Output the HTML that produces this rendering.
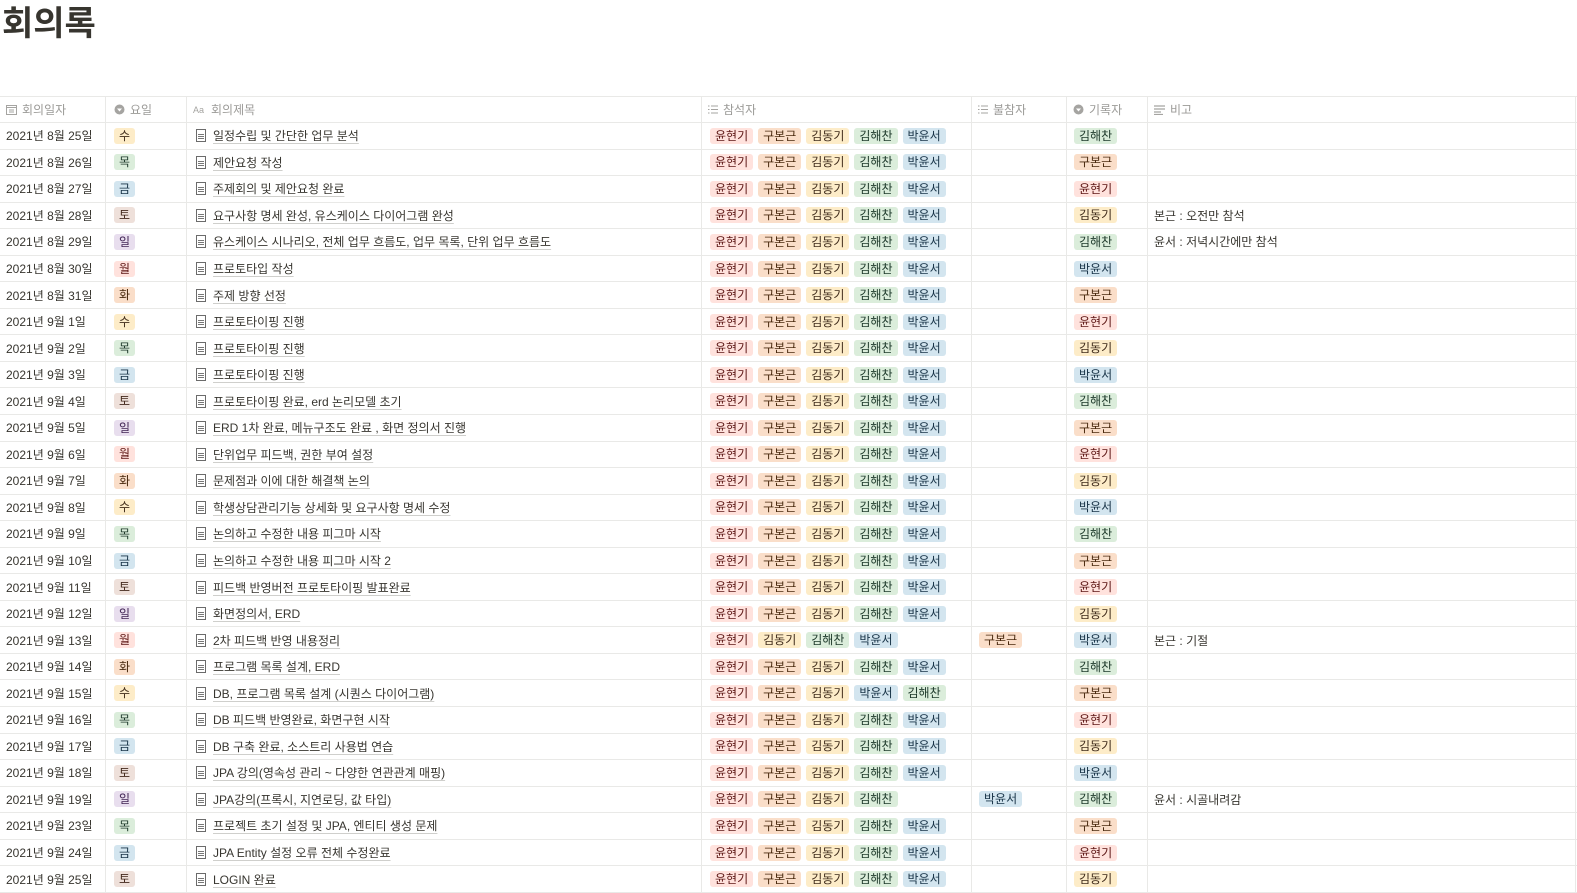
<!DOCTYPE html>
<html><head><meta charset="utf-8"><style>
html,body{margin:0;padding:0}
body{background:#fff;font-family:"Liberation Sans","Noto Sans CJK KR",sans-serif;color:#37352f;overflow:hidden;width:1577px;height:885px;position:relative}
h1{position:absolute;left:2px;top:-4px;margin:0;font-size:34px;font-weight:700;color:#37352f;font-family:"Liberation Sans","Noto Sans CJK KR",sans-serif}
.t{position:absolute;left:0;top:96px;width:1577px;border-top:1px solid #e9e9e7;overflow:hidden}
.r{display:grid;grid-template-columns:106px 81px 515px 270px 95px 81px 428px 1px;width:1577px;height:26.55px;box-sizing:border-box;border-bottom:1px solid #e9e9e7}
.r>div{border-right:1px solid #e9e9e7;box-sizing:border-box;padding-left:6px;display:flex;align-items:center;white-space:nowrap;overflow:hidden;font-size:12px}
.r>div:last-child{border-right:none}
.h{height:26px}
.h>div{color:#9b9a97;font-size:12px}
.h>div svg{margin-right:5px}
.g{display:inline-block;height:16px;line-height:16px;padding:0 5px;border-radius:3px;font-size:12px;margin-right:5px;font-weight:400}
.c2{padding-left:8px!important}
.c4{padding-left:8px!important}
.c5{padding-left:7px!important}
.c6{padding-left:7px!important}
.R{background:#ffe2dd;color:#5d1715}.O{background:#fadec9;color:#49290e}.Y{background:#fdecc8;color:#402c1b}.G{background:#dbeddb;color:#1c3829}.B{background:#d3e5ef;color:#183347}.P{background:#e8deee;color:#412454}.N{background:#eee0da;color:#442a1e}
.ti{padding-left:9px!important}
.ti span{text-decoration:underline;text-decoration-color:#cfcfcc;text-underline-offset:3px}
.ti i{display:inline-block;width:10px;height:13px;border:1px solid #6b6b6b;margin-right:7px;box-sizing:border-box;position:relative;background:linear-gradient(#777,#777) 1px 4px/6px 1px no-repeat,linear-gradient(#777,#777) 1px 6px/6px 1px no-repeat,linear-gradient(#777,#777) 1px 8px/6px 1px no-repeat}
</style></head><body>
<h1>회의록</h1>
<div class="t">
<div class="r h">
<div><svg width="11" height="11" viewBox="0 0 11 11"><rect x="0.5" y="1.5" width="10" height="9" fill="none" stroke="#a5a4a1"/><path d="M0.5 3.5h10M3 6h5M3 8h5" stroke="#a5a4a1"/></svg>회의일자</div>
<div class="c2"><svg width="11" height="11" viewBox="0 0 11 11"><circle cx="5.5" cy="5.5" r="5" fill="#a5a4a1"/><path d="M3 4.5h5l-2.5 3z" fill="#fff"/></svg>요일</div>
<div><svg width="13" height="9" viewBox="0 0 13 9"><text x="0" y="8" font-size="9" fill="#a5a4a1" font-family="Liberation Sans">Aa</text></svg>회의제목</div>
<div><svg width="10" height="9" viewBox="0 0 10 9"><path d="M0 1h1.5M3 1h7M0 4.5h1.5M3 4.5h7M0 8h1.5M3 8h7" stroke="#a5a4a1"/></svg>참석자</div>
<div><svg width="10" height="9" viewBox="0 0 10 9"><path d="M0 1h1.5M3 1h7M0 4.5h1.5M3 4.5h7M0 8h1.5M3 8h7" stroke="#a5a4a1"/></svg>불참자</div>
<div><svg width="11" height="11" viewBox="0 0 11 11"><circle cx="5.5" cy="5.5" r="5" fill="#a5a4a1"/><path d="M3 4.5h5l-2.5 3z" fill="#fff"/></svg>기록자</div>
<div><svg width="11" height="10" viewBox="0 0 11 10"><path d="M0 1h11M0 4h11M0 7h7M0 9.5h9" stroke="#a5a4a1" stroke-width="1.3"/></svg>비고</div>
<div></div>
</div>

<div class="r"><div>2021년 8월 25일</div><div class="c2"><b class="g Y">수</b></div><div class="ti"><i></i><span>일정수립 및 간단한 업무 분석</span></div><div class="c4"><b class="g R">윤현기</b><b class="g O">구본근</b><b class="g Y">김동기</b><b class="g G">김해찬</b><b class="g B">박윤서</b></div><div class="c5"></div><div class="c6"><b class="g G">김해찬</b></div><div></div><div></div></div>
<div class="r"><div>2021년 8월 26일</div><div class="c2"><b class="g G">목</b></div><div class="ti"><i></i><span>제안요청 작성</span></div><div class="c4"><b class="g R">윤현기</b><b class="g O">구본근</b><b class="g Y">김동기</b><b class="g G">김해찬</b><b class="g B">박윤서</b></div><div class="c5"></div><div class="c6"><b class="g O">구본근</b></div><div></div><div></div></div>
<div class="r"><div>2021년 8월 27일</div><div class="c2"><b class="g B">금</b></div><div class="ti"><i></i><span>주제회의 및 제안요청 완료</span></div><div class="c4"><b class="g R">윤현기</b><b class="g O">구본근</b><b class="g Y">김동기</b><b class="g G">김해찬</b><b class="g B">박윤서</b></div><div class="c5"></div><div class="c6"><b class="g R">윤현기</b></div><div></div><div></div></div>
<div class="r"><div>2021년 8월 28일</div><div class="c2"><b class="g N">토</b></div><div class="ti"><i></i><span>요구사항 명세 완성, 유스케이스 다이어그램 완성</span></div><div class="c4"><b class="g R">윤현기</b><b class="g O">구본근</b><b class="g Y">김동기</b><b class="g G">김해찬</b><b class="g B">박윤서</b></div><div class="c5"></div><div class="c6"><b class="g Y">김동기</b></div><div>본근 : 오전만 참석</div><div></div></div>
<div class="r"><div>2021년 8월 29일</div><div class="c2"><b class="g P">일</b></div><div class="ti"><i></i><span>유스케이스 시나리오, 전체 업무 흐름도, 업무 목록, 단위 업무 흐름도</span></div><div class="c4"><b class="g R">윤현기</b><b class="g O">구본근</b><b class="g Y">김동기</b><b class="g G">김해찬</b><b class="g B">박윤서</b></div><div class="c5"></div><div class="c6"><b class="g G">김해찬</b></div><div>윤서 : 저녁시간에만 참석</div><div></div></div>
<div class="r"><div>2021년 8월 30일</div><div class="c2"><b class="g R">월</b></div><div class="ti"><i></i><span>프로토타입 작성</span></div><div class="c4"><b class="g R">윤현기</b><b class="g O">구본근</b><b class="g Y">김동기</b><b class="g G">김해찬</b><b class="g B">박윤서</b></div><div class="c5"></div><div class="c6"><b class="g B">박윤서</b></div><div></div><div></div></div>
<div class="r"><div>2021년 8월 31일</div><div class="c2"><b class="g O">화</b></div><div class="ti"><i></i><span>주제 방향 선정</span></div><div class="c4"><b class="g R">윤현기</b><b class="g O">구본근</b><b class="g Y">김동기</b><b class="g G">김해찬</b><b class="g B">박윤서</b></div><div class="c5"></div><div class="c6"><b class="g O">구본근</b></div><div></div><div></div></div>
<div class="r"><div>2021년 9월 1일</div><div class="c2"><b class="g Y">수</b></div><div class="ti"><i></i><span>프로토타이핑 진행</span></div><div class="c4"><b class="g R">윤현기</b><b class="g O">구본근</b><b class="g Y">김동기</b><b class="g G">김해찬</b><b class="g B">박윤서</b></div><div class="c5"></div><div class="c6"><b class="g R">윤현기</b></div><div></div><div></div></div>
<div class="r"><div>2021년 9월 2일</div><div class="c2"><b class="g G">목</b></div><div class="ti"><i></i><span>프로토타이핑 진행</span></div><div class="c4"><b class="g R">윤현기</b><b class="g O">구본근</b><b class="g Y">김동기</b><b class="g G">김해찬</b><b class="g B">박윤서</b></div><div class="c5"></div><div class="c6"><b class="g Y">김동기</b></div><div></div><div></div></div>
<div class="r"><div>2021년 9월 3일</div><div class="c2"><b class="g B">금</b></div><div class="ti"><i></i><span>프로토타이핑 진행</span></div><div class="c4"><b class="g R">윤현기</b><b class="g O">구본근</b><b class="g Y">김동기</b><b class="g G">김해찬</b><b class="g B">박윤서</b></div><div class="c5"></div><div class="c6"><b class="g B">박윤서</b></div><div></div><div></div></div>
<div class="r"><div>2021년 9월 4일</div><div class="c2"><b class="g N">토</b></div><div class="ti"><i></i><span>프로토타이핑 완료, erd 논리모델 초기</span></div><div class="c4"><b class="g R">윤현기</b><b class="g O">구본근</b><b class="g Y">김동기</b><b class="g G">김해찬</b><b class="g B">박윤서</b></div><div class="c5"></div><div class="c6"><b class="g G">김해찬</b></div><div></div><div></div></div>
<div class="r"><div>2021년 9월 5일</div><div class="c2"><b class="g P">일</b></div><div class="ti"><i></i><span>ERD 1차 완료, 메뉴구조도 완료 , 화면 정의서 진행</span></div><div class="c4"><b class="g R">윤현기</b><b class="g O">구본근</b><b class="g Y">김동기</b><b class="g G">김해찬</b><b class="g B">박윤서</b></div><div class="c5"></div><div class="c6"><b class="g O">구본근</b></div><div></div><div></div></div>
<div class="r"><div>2021년 9월 6일</div><div class="c2"><b class="g R">월</b></div><div class="ti"><i></i><span>단위업무 피드백, 권한 부여 설정</span></div><div class="c4"><b class="g R">윤현기</b><b class="g O">구본근</b><b class="g Y">김동기</b><b class="g G">김해찬</b><b class="g B">박윤서</b></div><div class="c5"></div><div class="c6"><b class="g R">윤현기</b></div><div></div><div></div></div>
<div class="r"><div>2021년 9월 7일</div><div class="c2"><b class="g O">화</b></div><div class="ti"><i></i><span>문제점과 이에 대한 해결책 논의</span></div><div class="c4"><b class="g R">윤현기</b><b class="g O">구본근</b><b class="g Y">김동기</b><b class="g G">김해찬</b><b class="g B">박윤서</b></div><div class="c5"></div><div class="c6"><b class="g Y">김동기</b></div><div></div><div></div></div>
<div class="r"><div>2021년 9월 8일</div><div class="c2"><b class="g Y">수</b></div><div class="ti"><i></i><span>학생상담관리기능 상세화 및 요구사항 명세 수정</span></div><div class="c4"><b class="g R">윤현기</b><b class="g O">구본근</b><b class="g Y">김동기</b><b class="g G">김해찬</b><b class="g B">박윤서</b></div><div class="c5"></div><div class="c6"><b class="g B">박윤서</b></div><div></div><div></div></div>
<div class="r"><div>2021년 9월 9일</div><div class="c2"><b class="g G">목</b></div><div class="ti"><i></i><span>논의하고 수정한 내용 피그마 시작</span></div><div class="c4"><b class="g R">윤현기</b><b class="g O">구본근</b><b class="g Y">김동기</b><b class="g G">김해찬</b><b class="g B">박윤서</b></div><div class="c5"></div><div class="c6"><b class="g G">김해찬</b></div><div></div><div></div></div>
<div class="r"><div>2021년 9월 10일</div><div class="c2"><b class="g B">금</b></div><div class="ti"><i></i><span>논의하고 수정한 내용 피그마 시작 2</span></div><div class="c4"><b class="g R">윤현기</b><b class="g O">구본근</b><b class="g Y">김동기</b><b class="g G">김해찬</b><b class="g B">박윤서</b></div><div class="c5"></div><div class="c6"><b class="g O">구본근</b></div><div></div><div></div></div>
<div class="r"><div>2021년 9월 11일</div><div class="c2"><b class="g N">토</b></div><div class="ti"><i></i><span>피드백 반영버전 프로토타이핑 발표완료</span></div><div class="c4"><b class="g R">윤현기</b><b class="g O">구본근</b><b class="g Y">김동기</b><b class="g G">김해찬</b><b class="g B">박윤서</b></div><div class="c5"></div><div class="c6"><b class="g R">윤현기</b></div><div></div><div></div></div>
<div class="r"><div>2021년 9월 12일</div><div class="c2"><b class="g P">일</b></div><div class="ti"><i></i><span>화면정의서, ERD</span></div><div class="c4"><b class="g R">윤현기</b><b class="g O">구본근</b><b class="g Y">김동기</b><b class="g G">김해찬</b><b class="g B">박윤서</b></div><div class="c5"></div><div class="c6"><b class="g Y">김동기</b></div><div></div><div></div></div>
<div class="r"><div>2021년 9월 13일</div><div class="c2"><b class="g R">월</b></div><div class="ti"><i></i><span>2차 피드백 반영 내용정리</span></div><div class="c4"><b class="g R">윤현기</b><b class="g Y">김동기</b><b class="g G">김해찬</b><b class="g B">박윤서</b></div><div class="c5"><b class="g O">구본근</b></div><div class="c6"><b class="g B">박윤서</b></div><div>본근 : 기절</div><div></div></div>
<div class="r"><div>2021년 9월 14일</div><div class="c2"><b class="g O">화</b></div><div class="ti"><i></i><span>프로그램 목록 설계, ERD</span></div><div class="c4"><b class="g R">윤현기</b><b class="g O">구본근</b><b class="g Y">김동기</b><b class="g G">김해찬</b><b class="g B">박윤서</b></div><div class="c5"></div><div class="c6"><b class="g G">김해찬</b></div><div></div><div></div></div>
<div class="r"><div>2021년 9월 15일</div><div class="c2"><b class="g Y">수</b></div><div class="ti"><i></i><span>DB, 프로그램 목록 설계 (시퀀스 다이어그램)</span></div><div class="c4"><b class="g R">윤현기</b><b class="g O">구본근</b><b class="g Y">김동기</b><b class="g B">박윤서</b><b class="g G">김해찬</b></div><div class="c5"></div><div class="c6"><b class="g O">구본근</b></div><div></div><div></div></div>
<div class="r"><div>2021년 9월 16일</div><div class="c2"><b class="g G">목</b></div><div class="ti"><i></i><span>DB 피드백 반영완료, 화면구현 시작</span></div><div class="c4"><b class="g R">윤현기</b><b class="g O">구본근</b><b class="g Y">김동기</b><b class="g G">김해찬</b><b class="g B">박윤서</b></div><div class="c5"></div><div class="c6"><b class="g R">윤현기</b></div><div></div><div></div></div>
<div class="r"><div>2021년 9월 17일</div><div class="c2"><b class="g B">금</b></div><div class="ti"><i></i><span>DB 구축 완료, 소스트리 사용법 연습</span></div><div class="c4"><b class="g R">윤현기</b><b class="g O">구본근</b><b class="g Y">김동기</b><b class="g G">김해찬</b><b class="g B">박윤서</b></div><div class="c5"></div><div class="c6"><b class="g Y">김동기</b></div><div></div><div></div></div>
<div class="r"><div>2021년 9월 18일</div><div class="c2"><b class="g N">토</b></div><div class="ti"><i></i><span>JPA 강의(영속성 관리 ~ 다양한 연관관계 매핑)</span></div><div class="c4"><b class="g R">윤현기</b><b class="g O">구본근</b><b class="g Y">김동기</b><b class="g G">김해찬</b><b class="g B">박윤서</b></div><div class="c5"></div><div class="c6"><b class="g B">박윤서</b></div><div></div><div></div></div>
<div class="r"><div>2021년 9월 19일</div><div class="c2"><b class="g P">일</b></div><div class="ti"><i></i><span>JPA강의(프록시, 지연로딩, 값 타입)</span></div><div class="c4"><b class="g R">윤현기</b><b class="g O">구본근</b><b class="g Y">김동기</b><b class="g G">김해찬</b></div><div class="c5"><b class="g B">박윤서</b></div><div class="c6"><b class="g G">김해찬</b></div><div>윤서 : 시골내려감</div><div></div></div>
<div class="r"><div>2021년 9월 23일</div><div class="c2"><b class="g G">목</b></div><div class="ti"><i></i><span>프로젝트 초기 설정 및 JPA, 엔티티 생성 문제</span></div><div class="c4"><b class="g R">윤현기</b><b class="g O">구본근</b><b class="g Y">김동기</b><b class="g G">김해찬</b><b class="g B">박윤서</b></div><div class="c5"></div><div class="c6"><b class="g O">구본근</b></div><div></div><div></div></div>
<div class="r"><div>2021년 9월 24일</div><div class="c2"><b class="g B">금</b></div><div class="ti"><i></i><span>JPA Entity 설정 오류 전체 수정완료</span></div><div class="c4"><b class="g R">윤현기</b><b class="g O">구본근</b><b class="g Y">김동기</b><b class="g G">김해찬</b><b class="g B">박윤서</b></div><div class="c5"></div><div class="c6"><b class="g R">윤현기</b></div><div></div><div></div></div>
<div class="r"><div>2021년 9월 25일</div><div class="c2"><b class="g N">토</b></div><div class="ti"><i></i><span>LOGIN 완료</span></div><div class="c4"><b class="g R">윤현기</b><b class="g O">구본근</b><b class="g Y">김동기</b><b class="g G">김해찬</b><b class="g B">박윤서</b></div><div class="c5"></div><div class="c6"><b class="g Y">김동기</b></div><div></div><div></div></div>
</div>
</body></html>
